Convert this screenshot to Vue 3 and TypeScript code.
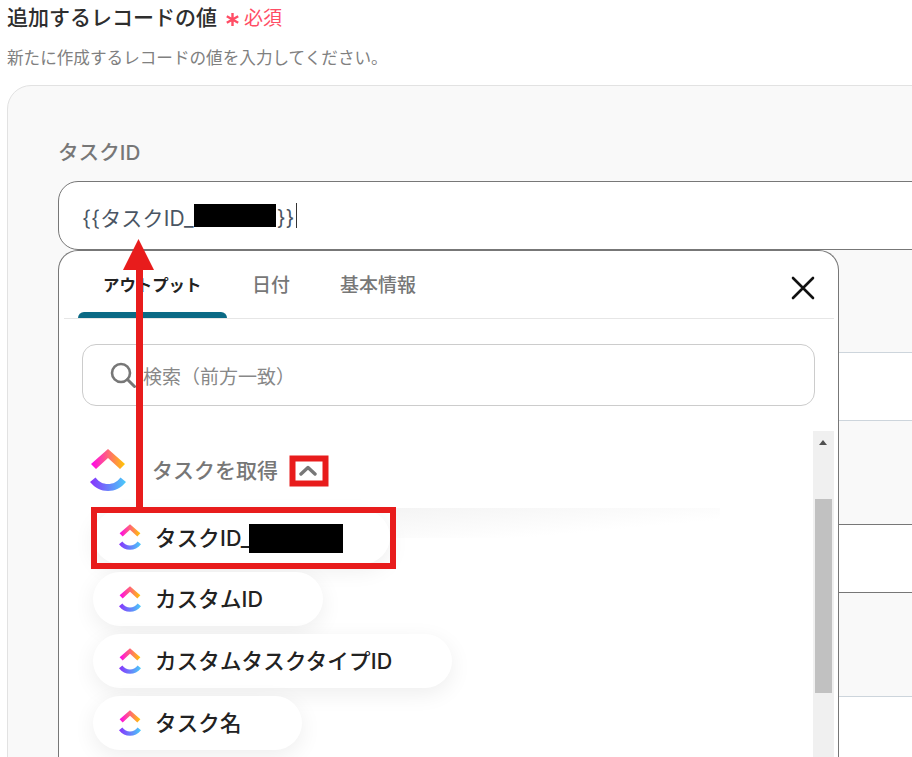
<script setup lang="ts">
interface Item {
  label: string;
  masked?: boolean;
}
const tabs: string[] = ['アウトプット', '日付', '基本情報'];
const items: Item[] = [
  { label: 'タスクID_', masked: true },
  { label: 'カスタムID' },
  { label: 'カスタムタスクタイプID' },
  { label: 'タスク名' },
];
const bands: string[] = ['clear light top', 'white light', 'clear dark', 'white dark', 'clear light', 'white'];
const open: string = String.fromCharCode(123, 123) + 'タスクID_';
const close: string = String.fromCharCode(125, 125);
</script>

<template>
  <div class="page">
    <h1 class="title">
      <span>追加するレコードの値</span>
      <span class="req">
        <svg class="star" width="15" height="15" viewBox="0 0 15 15">
          <path d="M7.5 1 V14 M1.8 4.2 L13.2 10.8 M13.2 4.2 L1.8 10.8" stroke="#ff4d65" stroke-width="2.4" fill="none" />
        </svg>
        必須
      </span>
    </h1>
    <p class="desc">新たに作成するレコードの値を入力してください。</p>

    <section class="card">
      <div class="label">タスクID</div>
      <div class="field">
        <div class="input">
          <span class="input-text" v-text="open"></span><span class="mask mask-input"></span><span class="input-text closing" v-text="close"></span><span class="caret"></span>
        </div>

        <div class="popup">
          <button class="close" aria-label="閉じる">
            <svg width="24" height="24" viewBox="0 0 24 24">
              <path d="M2 2 L22 22 M22 2 L2 22" stroke="#111" stroke-width="2.6" stroke-linecap="round" fill="none" />
            </svg>
          </button>
          <nav class="tabs">
            <div v-for="(t, i) in tabs" :key="t" class="tab" :class="{ active: i === 0 }">{{ t }}</div>
          </nav>
          <div class="search">
            <svg class="search-icon" width="26" height="26" viewBox="0 0 26 26">
              <circle cx="11" cy="11" r="9" stroke="#777" stroke-width="2.6" fill="none" />
              <path d="M17.5 17.5 L24.5 24.5" stroke="#777" stroke-width="3" stroke-linecap="round" />
            </svg>
            <span>検索（前方一致）</span>
          </div>
          <div class="list">
            <div class="list-body">
              <div class="group">
                <svg class="logo-lg" width="36" height="42" viewBox="0 0 36 42">
                  <defs>
                    <linearGradient id="cuTop" x1="0" y1="0" x2="1" y2="0">
                      <stop offset="0" stop-color="#ff02f0" />
                      <stop offset="1" stop-color="#ffc800" />
                    </linearGradient>
                    <linearGradient id="cuBottom" x1="0" y1="0" x2="1" y2="0">
                      <stop offset="0" stop-color="#8930fd" />
                      <stop offset="1" stop-color="#49ccf9" />
                    </linearGradient>
                  </defs>
                  <path d="M18 0 L35 15 L30 20 L18 9 L6 20 L1 15 Z" fill="url(#cuTop)" />
                  <path d="M0 33 L5.5 28.5 C9 33 13 35 18 35 C23 35 27 33 30.5 28.5 L36 33 C31 39 25 42 18 42 C11 42 5 39 0 33 Z" fill="url(#cuBottom)" />
                </svg>
                <span class="group-name">タスクを取得</span>
                <svg class="chev" width="18" height="11" viewBox="0 0 18 11">
                  <path d="M2 9 L9 2.5 L16 9" stroke="#777" stroke-width="3.4" fill="none" stroke-linecap="round" stroke-linejoin="round" />
                </svg>
              </div>
              <div class="items">
                <div v-for="it in items" :key="it.label" class="item" :class="{ first: it.masked }">
                  <svg width="22" height="26" viewBox="0 0 36 42">
                    <path d="M18 0 L35 15 L30 20 L18 9 L6 20 L1 15 Z" fill="url(#cuTop)" />
                    <path d="M0 33 L5.5 28.5 C9 33 13 35 18 35 C23 35 27 33 30.5 28.5 L36 33 C31 39 25 42 18 42 C11 42 5 39 0 33 Z" fill="url(#cuBottom)" />
                  </svg>
                  <span class="item-text">{{ it.label }}</span>
                  <span v-if="it.masked" class="mask mask-item"></span>
                </div>
              </div>
            </div>
            <div class="scrollbar">
              <span class="arrow"></span>
              <span class="thumb"></span>
            </div>
          </div>
        </div>
      </div>

      <div v-for="(b, i) in bands" :key="i" class="band" :class="b"></div>
    </section>

    <svg class="notes" width="912" height="757" viewBox="0 0 912 757">
      <rect x="94" y="510" width="299" height="56" fill="none" stroke="#e81c1c" stroke-width="6" />
      <rect x="292.5" y="458.5" width="33" height="25" fill="none" stroke="#e81c1c" stroke-width="6" />
      <rect x="136" y="268" width="7" height="240" fill="#e81c1c" />
      <path d="M138.5 239 L154 270 L123 270 Z" fill="#e81c1c" />
    </svg>
  </div>
</template>

<style scoped>
.page {
  position: relative;
  width: 912px;
  height: 757px;
  overflow: hidden;
  background: #fff;
  font-family: Inter, "Noto Sans CJK JP", sans-serif;
}
.title {
  margin: 0;
  padding-left: 7px;
  height: 36px;
  display: flex;
  align-items: center;
  gap: 8px;
  font-size: 21px;
  font-weight: 500;
  line-height: 36px;
  color: #2e2e2e;
}
.req {
  display: inline-flex;
  align-items: center;
  gap: 4px;
  font-size: 19px;
  font-weight: 400;
  color: #ff4d65;
  margin-top: 2px;
}
.desc {
  margin: 10px 0 0;
  padding-left: 7px;
  font-size: 16.6px;
  line-height: 24px;
  color: #808080;
}
.card {
  box-sizing: border-box;
  margin: 15px 0 0 7px;
  width: 1100px;
  height: 800px;
  padding: 51px 50px 0;
  border: 1px solid #e2e2e2;
  border-radius: 24px;
  background: #f9f9f9;
}
.label {
  height: 30px;
  line-height: 32px;
  font-size: 20.6px;
  font-weight: 500;
  color: #777;
}
.field {
  position: relative;
  margin-top: 14px;
  z-index: 2;
}
.input {
  box-sizing: border-box;
  height: 69px;
  padding-left: 23px;
  display: flex;
  align-items: center;
  border: 1px solid #777;
  border-radius: 20px;
  background: #fff;
  font-size: 21px;
  color: #4a5563;
}
.input-text {
  padding-top: 3px;
  letter-spacing: 0.15px;
}
.input-text.closing {
  letter-spacing: 0;
  margin-left: 1px;
}
.mask {
  display: inline-block;
  background: #000;
}
.mask-input {
  width: 82px;
  height: 23px;
}
.caret {
  width: 1px;
  height: 25px;
  margin-left: 1px;
  background: #333;
}
.popup {
  position: absolute;
  left: 0;
  top: 100%;
  box-sizing: border-box;
  width: 781px;
  height: 560px;
  border: 1px solid #777;
  border-bottom: 0;
  border-radius: 20px 20px 0 0;
  background: #fff;
}
.close {
  position: absolute;
  top: 25px;
  right: 23px;
  padding: 0;
  border: 0;
  background: none;
  line-height: 0;
}
.tabs {
  display: flex;
  height: 68px;
  margin: 0 4px 0 5px;
  padding-left: 14px;
  box-sizing: border-box;
  border-bottom: 1px solid #e6e6e6;
}
.tab {
  position: relative;
  padding: 0 25px;
  height: 67px;
  line-height: 69px;
  font-size: 19px;
  font-weight: 500;
  color: #777;
}
.tab.active {
  width: 149px;
  box-sizing: border-box;
  font-size: 16.4px;
  font-weight: 700;
  color: #222;
}
.tab.active::after {
  content: "";
  position: absolute;
  left: 0;
  right: 0;
  bottom: 0;
  height: 6px;
  border-radius: 6px 6px 0 0;
  background: #0b6a85;
}
.search {
  box-sizing: border-box;
  display: flex;
  align-items: center;
  gap: 7px;
  width: 733px;
  height: 62px;
  margin: 25px 0 0 23px;
  padding-left: 27px;
  border: 1px solid #ccc;
  border-radius: 14px;
  font-size: 19px;
  color: #888;
}
.list {
  display: flex;
  margin: 25px 4px 0 0;
  height: 340px;
}
.list-body {
  flex: 1;
  padding: 18px 0 0 34px;
}
.group {
  display: flex;
  align-items: center;
  height: 42px;
  margin-left: -3px;
}
.logo-lg {
  flex: none;
}
.group-name {
  margin: -3px 0 0 26px;
  font-size: 21px;
  font-weight: 500;
  color: #777;
}
.chev {
  margin-left: 21px;
}
.items {
  display: flex;
  flex-direction: column;
  align-items: flex-start;
  gap: 8px;
  margin-top: 19px;
}
.item {
  position: relative;
  display: inline-flex;
  align-items: center;
  gap: 14px;
  height: 54px;
  padding: 0 60px 0 26px;
  box-sizing: border-box;
  border-radius: 27px;
  background: #fff;
  box-shadow: 0 6px 22px rgba(0, 0, 0, 0.07);
  font-size: 21.5px;
  letter-spacing: 0.15px;
  font-weight: 500;
  color: #222;
}
.item-text {
  white-space: nowrap;
  margin-top: -3px;
}
.item.first {
  padding-right: 45px;
  gap: 0;
}
.item.first .item-text {
  margin: -1px 0 0 14px;
}
.item.first::after {
  content: "";
  position: absolute;
  left: 100%;
  top: -2px;
  width: 330px;
  height: 30px;
  background: linear-gradient(to bottom right, #f4f4f4, rgba(255, 255, 255, 0) 70%);
}
.mask-item {
  width: 94px;
  height: 29px;
  margin: 3px 2px 0 -2px;
}
.scrollbar {
  flex: none;
  display: flex;
  flex-direction: column;
  width: 21px;
  background: #f0f0f0;
}
.arrow {
  width: 0;
  height: 0;
  margin: 9px 0 0 6px;
  border: 4.5px solid transparent;
  border-top: 0;
  border-bottom: 5px solid #505050;
}
.thumb {
  width: 17px;
  height: 194px;
  margin: 54px 0 0 2px;
  background: #c1c1c1;
}
.band {
  box-sizing: border-box;
  height: 104px;
}
.band.top {
  height: 103px;
}
.band.white {
  height: 68px;
  background: #fff;
}
.band.light {
  border-bottom: 1px solid #cdd5dc;
}
.band.dark {
  border-bottom: 1px solid #777;
}
.notes {
  position: absolute;
  inset: 0;
  z-index: 3;
  pointer-events: none;
}
</style>
